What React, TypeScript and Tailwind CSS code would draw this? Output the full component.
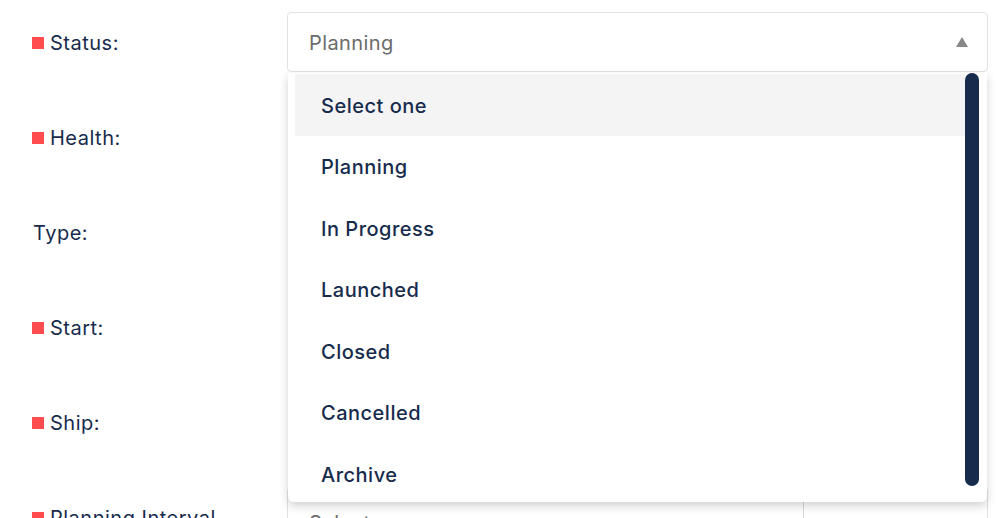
import React from "react";

const fields = [
  { label: "Status:", required: true },
  { label: "Health:", required: true },
  { label: "Type:", required: false },
  { label: "Start:", required: true },
  { label: "Ship:", required: true },
  { label: "Planning Interval", required: true },
];

const options = ["Select one", "Planning", "In Progress", "Launched", "Closed", "Cancelled", "Archive"];

function Label({ text, required }: { text: string; required: boolean }) {
  return (
    <div className="w-[287px] shrink-0 pl-[32px] flex items-center gap-[6px] text-[20px] tracking-[0.5px] text-[#172b4d]">
      {required && <span className="w-[12px] h-[12px] bg-[#ff4d4f] shrink-0 mt-[1px]" />}
      <span className={required ? "pt-[2px]" : "pt-[2px] pl-px"}>{text}</span>
    </div>
  );
}

export default function App() {
  return (
    <div
      className="relative w-[999px] h-[518px] overflow-hidden bg-white"
      style={{ fontFamily: "Inter, 'Noto Sans', sans-serif" }}
    >
      <div className="pt-[12px] flex flex-col gap-[35px]">
        {fields.map((f, i) => (
          <div key={f.label} className="flex h-[60px]">
            <Label text={f.label} required={f.required} />
            <div className="flex-1 pr-[11px]">
              {i === 0 ? (
                <div className="h-full flex items-center justify-between border border-[#e2e2e2] rounded-[4px] pl-[21px] pr-[19px]">
                  <span className="pt-[2px] text-[20px] tracking-[0.4px] text-[#6b6b6b]">Planning</span>
                  <svg width="12" height="10" viewBox="0 0 12 10">
                    <path d="M6 0 L12 10 L0 10 Z" fill="#888" />
                  </svg>
                </div>
              ) : i === 5 ? (
                <div className="h-full flex border border-[#e2e2e2] rounded-[4px]">
                  <div className="w-[516px] border-r border-[#d8d8d8] pl-[21px] pt-[20px] text-[20px] tracking-[0.4px] text-[#6b6b6b]">
                    Select...
                  </div>
                  <div className="flex-1" />
                </div>
              ) : null}
            </div>
          </div>
        ))}
      </div>

      {/* open menu */}
      <div className="absolute left-[288px] top-[73px] w-[699px] h-[429px] bg-white rounded-b-[6px] shadow-[0_4px_10px_rgba(0,0,0,0.18)] flex pl-[7px] pr-[8px]">
        <ul className="flex-1 pt-[1px]">
          {options.map((o, i) => (
            <li
              key={o}
              className={`h-[61.5px] flex items-center pl-[26px] pt-[2px] text-[20px] font-medium tracking-[0.5px] text-[#172b4d] ${
                i === 0 ? "bg-[#f4f4f4]" : ""
              }`}
            >
              {o}
            </li>
          ))}
        </ul>
        <div className="w-[14px] h-[413px] rounded-full bg-[#172b4d]" />
      </div>
    </div>
  );
}
